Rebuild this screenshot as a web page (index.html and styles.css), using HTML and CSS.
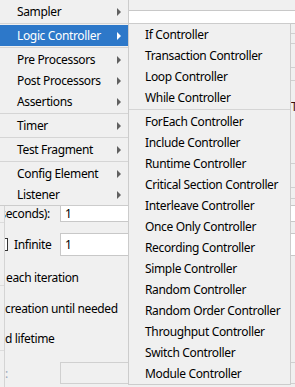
FILE: index.html
```html
<!DOCTYPE html>
<html lang="en">
  <head>
    <meta charset="UTF-8" />
    <title>Add menu</title>
    <link rel="stylesheet" href="styles.css">
  </head>
  <body>
    <div class="screen">
      <div class="tree">
        <div class="tree-row first"></div>
        <div class="tree-row second"></div>
        <div class="tree-row third"></div>
      </div>

      <div class="form">
        <div class="name-field"></div>
        <div class="frame frame-a"></div>
        <div class="frame frame-b"></div>
        <div class="title">Thread Properties</div>
        <div class="rule rule-a"></div>
        <div class="rule rule-b"></div>
        <div class="rule rule-c"></div>

        <div class="row row-rampup">
          <div class="label"><span>Ramp-up period (seconds):</span></div>
          <div class="input">1</div>
        </div>
        <div class="row row-loop">
          <div class="label left">
            <span class="checkbox"></span>
            <span class="check-text">Infinite</span>
          </div>
          <div class="input">1</div>
        </div>
        <div class="line line-a">each iteration</div>
        <div class="line line-b">creation until needed</div>
        <div class="line line-c">d lifetime</div>
        <div class="row row-duration">
          <div class="label left"><span class="disabled">:</span></div>
          <div class="input off"></div>
        </div>
      </div>

      <!-- popup menu -->
      <div class="menu main-menu">
        <div class="item">Sampler<span class="arrow"></span></div>
        <div class="sep"></div>
        <div class="item active">Logic Controller<span class="arrow"></span></div>
        <div class="sep"></div>
        <div class="item">Pre Processors<span class="arrow"></span></div>
        <div class="item">Post Processors<span class="arrow"></span></div>
        <div class="item">Assertions<span class="arrow"></span></div>
        <div class="sep"></div>
        <div class="item">Timer<span class="arrow"></span></div>
        <div class="sep"></div>
        <div class="item">Test Fragment<span class="arrow"></span></div>
        <div class="sep"></div>
        <div class="item">Config Element<span class="arrow"></span></div>
        <div class="item">Listener<span class="arrow"></span></div>
      </div>

      <div class="menu sub-menu">
        <div class="item">If Controller</div>
        <div class="item">Transaction Controller</div>
        <div class="item">Loop Controller</div>
        <div class="item">While Controller</div>
        <div class="sep"></div>
        <div class="item">ForEach Controller</div>
        <div class="item">Include Controller</div>
        <div class="item">Runtime Controller</div>
        <div class="item">Critical Section Controller</div>
        <div class="item">Interleave Controller</div>
        <div class="item">Once Only Controller</div>
        <div class="item">Recording Controller</div>
        <div class="item">Simple Controller</div>
        <div class="item">Random Controller</div>
        <div class="item">Random Order Controller</div>
        <div class="item">Throughput Controller</div>
        <div class="item">Switch Controller</div>
        <div class="item">Module Controller</div>
      </div>
    </div>
  </body>
</html>
```

FILE: styles.css
```css
body {
  margin: 0;
  font-family: "Noto Sans", sans-serif;
  font-size: 12px;
  letter-spacing: -0.35px;
  color: #000;
}
.screen {
  position: relative;
  display: flex;
  width: 295px;
  height: 387px;
  overflow: hidden;
  background-color: #f0f0f0;
}

/* background panel */
.tree {
  width: 4px;
  flex-shrink: 0;
  border-right: 1px solid #d4d4d4;
}
.tree-row {
  border-top: 1px solid #dcdcdc;
}
.tree-row.first { margin-top: 222px; }
.tree-row.second { margin-top: 62px; }
.tree-row.third { margin-top: 64px; }

.form {
  flex: 1;
  display: flex;
  flex-direction: column;
  overflow: hidden;
}
.name-field {
  margin-top: 10px;
  height: 12px;
  background-color: #fff;
  border-top: 1px solid #c8c8c8;
  border-bottom: 1px solid #c8c8c8;
}
.frame {
  border-top: 1px solid #d0d0d0;
  border-bottom: 1px solid #d0d0d0;
}
.frame-a { margin-top: 9px; height: 9px; }
.frame-b { margin-top: 23px; height: 12px; }
.title {
  margin-top: 16px;
  padding-left: 286px;
  line-height: 20px;
  white-space: nowrap;
  color: #3a0c0c;
}
.rule {
  border-top: 1px solid #d0d0d0;
}
.rule-a { margin-top: 46px; }
.rule-b { margin-top: 23px; }
.rule-c { margin-top: 10px; }

.row {
  display: flex;
  flex-shrink: 0;
}
.row-rampup { margin-top: 6px; height: 17px; }
.row-loop { margin-top: 11px; height: 23px; }
.row-duration { margin-top: 13px; height: 22px; }
.label {
  width: 55px;
  flex-shrink: 0;
  display: flex;
  align-items: center;
  justify-content: flex-end;
  padding-right: 10px;
  box-sizing: border-box;
  white-space: nowrap;
}
.label span {
  flex-shrink: 0;
}
.label.left {
  justify-content: flex-start;
  padding-right: 0;
}
.checkbox {
  width: 11px;
  height: 11px;
  margin-left: -10px;
  border: 1px solid #333;
  background-color: #fff;
}
.check-text {
  margin-left: 6px;
}
.disabled {
  color: #9aa7ba;
}
.input {
  flex: 1;
  display: flex;
  align-items: center;
  padding-left: 4px;
  background-color: #fff;
  border: 1px solid #c8c8c8;
  border-right: none;
}
.input.off {
  background-color: #f0f0f0;
  border-color: #d0d0d0;
}
.line {
  height: 20px;
  line-height: 20px;
  white-space: nowrap;
}
.line-a { margin-top: 12px; padding-left: 1px; }
.line-b { margin-top: 11px; }
.line-c { margin-top: 10px; }

/* popup menus */
.menu {
  position: absolute;
  background-color: #f0f0f0;
  border: 1px solid #cccccc;
}
.main-menu {
  left: 0;
  top: 0;
  width: 128px;
  padding-top: 1px;
  border-left: none;
  border-top: none;
}
.sub-menu {
  left: 128px;
  top: 23px;
  width: 161px;
}
.item {
  display: flex;
  align-items: center;
  justify-content: space-between;
  height: 21px;
  line-height: 20px;
  padding-top: 1px;
  box-sizing: border-box;
  white-space: nowrap;
}
.main-menu .item {
  padding-left: 17px;
  padding-right: 7px;
}
.sub-menu .item {
  padding-left: 16px;
}
.item.active {
  background-color: #2d78c9;
  color: #fff;
}
.arrow {
  width: 0;
  height: 0;
  margin-top: -1px;
  border-left: 4px solid #606060;
  border-top: 4px solid transparent;
  border-bottom: 4px solid transparent;
}
.item.active .arrow {
  border-left-color: #fff;
}
.sep {
  height: 1px;
  margin: 1px 0;
  background-color: #d5d5d5;
}
```
